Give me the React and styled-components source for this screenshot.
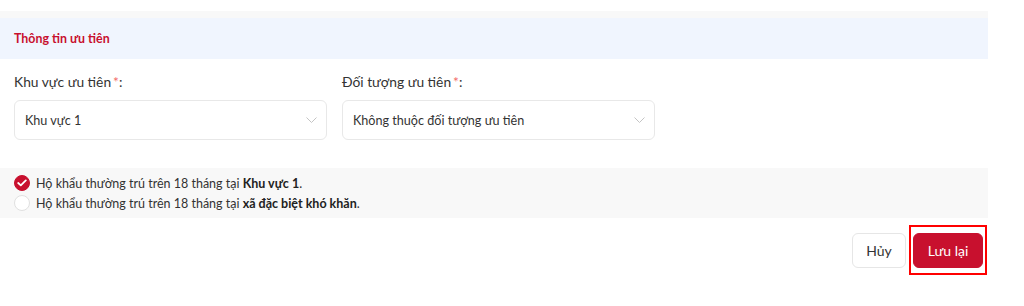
import React from "react";
import styled, { createGlobalStyle } from "styled-components";

const Global = createGlobalStyle`
  html, body { margin: 0; padding: 0; background: #fff; }
  body { font-family: Lato, "Noto Sans", sans-serif; color: #333; }
  * { box-sizing: border-box; }
`;

const Page = styled.div`
  width: 988px;
  padding-top: 11px;
`;

const TopStrip = styled.div`
  height: 7px;
  background: #f8f8f8;
`;

const Header = styled.div`
  height: 41px;
  background: #f0f5fe;
  display: flex;
  align-items: center;
  padding-left: 14px;
`;

const Title = styled.h3`
  margin: 0;
  font-size: 12.4px;
  font-weight: 700;
  color: #c8102e;
`;

const Fields = styled.div`
  display: flex;
  gap: 15px;
  padding: 13px 14px 0;
`;

const Field = styled.div`
  width: 313px;
  display: flex;
  flex-direction: column;
  gap: 8px;
`;

const Label = styled.label`
  font-size: 13.8px;
  line-height: 20px;
  color: #333;
`;

const Star = styled.span`
  color: #f36b6b;
  margin-left: 2px;
`;

const Select = styled.div`
  height: 40px;
  border: 1px solid #e8e8e8;
  border-radius: 6px;
  display: flex;
  align-items: center;
  justify-content: space-between;
  padding: 0 9px 0 10px;
  font-size: 12.6px;
  color: #333;
`;

const Band = styled.div`
  margin-top: 28px;
  background: #f8f8f8;
  padding: 5px 14px;
  display: flex;
  flex-direction: column;
`;

const Option = styled.div`
  display: flex;
  align-items: center;
  gap: 6px;
  height: 20px;
  font-size: 12.5px;
  color: #333;
  b { font-weight: 700; color: #222; }
`;

const Radio = styled.span`
  width: 16px;
  height: 16px;
  border-radius: 50%;
  flex: none;
  display: flex;
  align-items: center;
  justify-content: center;
  background: ${(p) => (p.$checked ? "#c8102e" : "#fff")};
  border: 1px solid ${(p) => (p.$checked ? "#c8102e" : "#e0e0e0")};
`;

const Actions = styled.div`
  display: flex;
  justify-content: flex-end;
  align-items: center;
  gap: 3px;
  padding: 7px 1px 0 0;
`;

const Highlight = styled.span`
  display: inline-flex;
  border: 2px solid #ff0000;
  padding: 6px 2px 5px;
`;

const Button = styled.button`
  height: 35px;
  padding: 0;
  width: ${(p) => (p.$primary ? "70px" : "54px")};
  border-radius: 6px;
  font-family: Lato, "Noto Sans", sans-serif;
  font-size: 14px;
  cursor: pointer;
  border: 1px solid ${(p) => (p.$primary ? "#c8102e" : "#e6e6e6")};
  background: ${(p) => (p.$primary ? "#c8102e" : "#fff")};
  color: ${(p) => (p.$primary ? "#fff" : "#333")};
`;

const Chevron = () => (
  <svg width="11" height="6" viewBox="0 0 11 6" fill="none">
    <path d="M0.5 0.5 L5.5 5.5 L10.5 0.5" stroke="#c4c4c4" strokeWidth="1" />
  </svg>
);

const Check = () => (
  <svg width="10" height="8" viewBox="0 0 10 8" fill="none">
    <path d="M1.2 4 L3.8 6.4 L8.8 1.4" stroke="#fff" strokeWidth="1.8" strokeLinecap="round" strokeLinejoin="round" />
  </svg>
);

export default function App() {
  return (
    <>
      <Global />
      <Page>
        <TopStrip />
        <Header>
          <Title>Thông tin ưu tiên</Title>
        </Header>
        <Fields>
          <Field>
            <Label>
              Khu vực ưu tiên<Star>*</Star>:
            </Label>
            <Select>
              <span>Khu vực 1</span>
              <Chevron />
            </Select>
          </Field>
          <Field>
            <Label>
              Đối tượng ưu tiên<Star>*</Star>:
            </Label>
            <Select>
              <span>Không thuộc đối tượng ưu tiên</span>
              <Chevron />
            </Select>
          </Field>
        </Fields>
        <Band>
          <Option>
            <Radio $checked>
              <Check />
            </Radio>
            <span>
              Hộ khẩu thường trú trên 18 tháng tại <b>Khu vực 1</b>.
            </span>
          </Option>
          <Option>
            <Radio />
            <span>
              Hộ khẩu thường trú trên 18 tháng tại <b>xã đặc biệt khó khăn</b>.
            </span>
          </Option>
        </Band>
        <Actions>
          <Button>Hủy</Button>
          <Highlight>
            <Button $primary>Lưu lại</Button>
          </Highlight>
        </Actions>
      </Page>
    </>
  );
}
